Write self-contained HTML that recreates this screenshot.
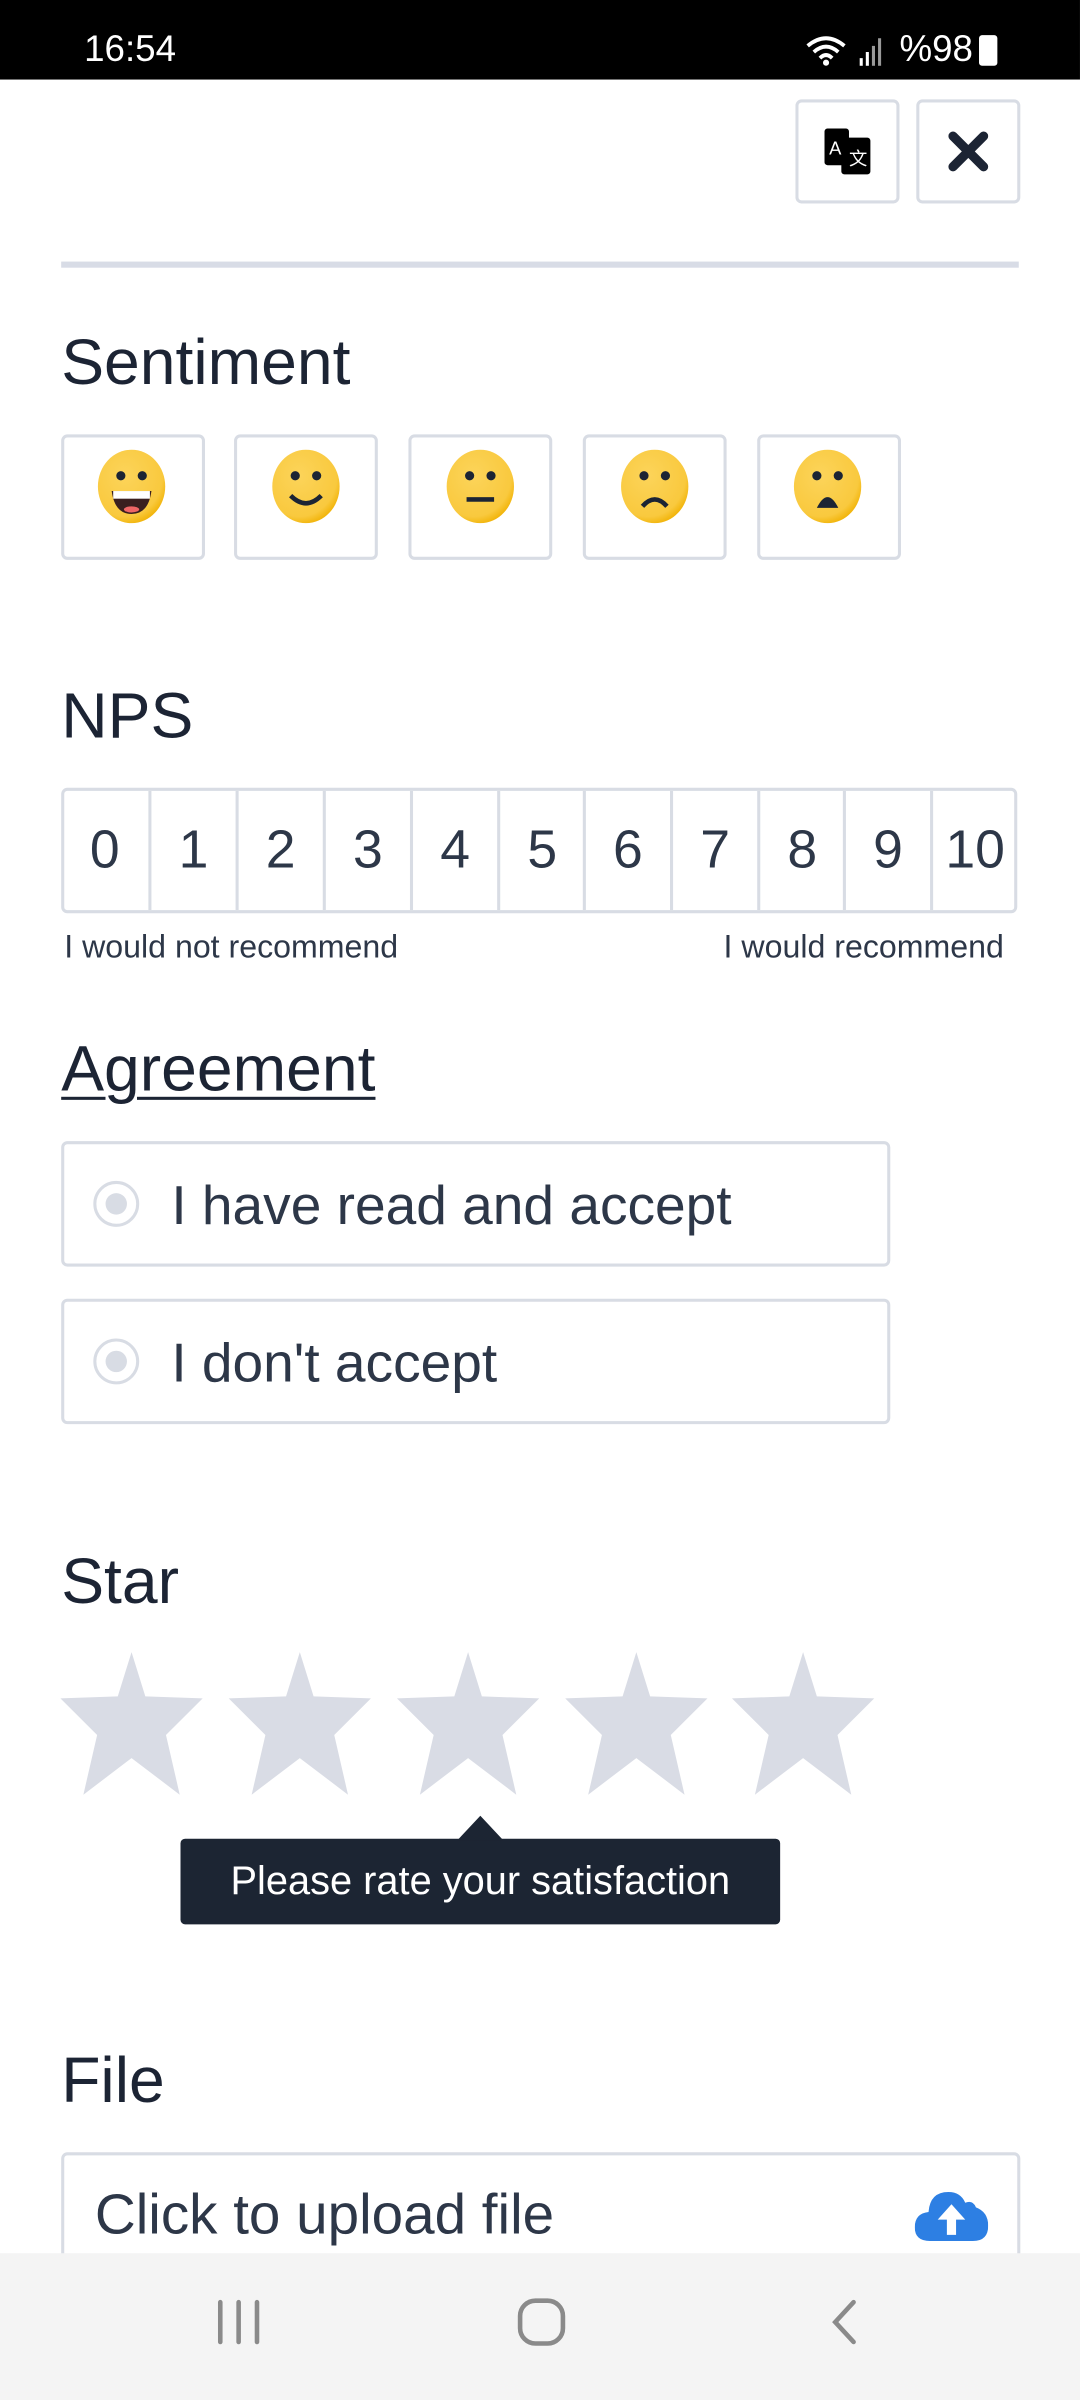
<!DOCTYPE html>
<html><head><meta charset="utf-8"><style>
html,body{margin:0;padding:0;width:1080px;height:2400px;overflow:hidden;background:#fff}
#w{position:absolute;left:0;top:0;width:706px;height:1569px;transform:scale(1.5297);transform-origin:0 0;font-family:"Liberation Sans",Roboto,sans-serif;color:#1c2434}
.a{position:absolute}
.box{position:absolute;border:2px solid #d8dce4;border-radius:4px;box-sizing:border-box;background:#fff}
.t{position:absolute;left:40px;font-size:42px;line-height:1}
.cell{position:absolute;top:0;height:100%;border-left:2px solid #d8dce4;box-sizing:border-box;font-size:35px;color:#2d3748;text-align:center;line-height:78px}
</style></head><body><div id="w">
<div class="a" style="left:0;top:0;width:706px;height:52px;background:#000"></div>
<div class="a" style="left:55px;top:19px;color:#fff;font-size:24px">16:54</div>
<div class="a" style="left:588px;top:19px;color:#fff;font-size:24px">%98</div>
<div class="a" style="left:640px;top:23px;width:12px;height:20px;background:#fff;border-radius:2px"></div>
<svg class="a" style="left:526px;top:22px" width="54" height="22"><path d="M2 8 Q14 -2 26 8 M6 12 Q14 5 22 12 M10 16 Q14 12 18 16" stroke="#fff" stroke-width="2.5" fill="none"/><circle cx="14" cy="19" r="2" fill="#fff"/><rect x="36" y="16" width="2" height="5" fill="#fff"/><rect x="40" y="12" width="2" height="9" fill="#fff"/><rect x="44" y="8" width="2" height="13" fill="#999"/><rect x="48" y="3" width="2" height="18" fill="#999"/></svg>
<div class="box" style="left:520px;top:65px;width:68px;height:68px"></div>
<div class="box" style="left:599px;top:65px;width:68px;height:68px"></div>
<svg class="a" style="left:538px;top:84px" width="32" height="32"><rect x="1" y="0" width="16" height="24" rx="2" fill="#000"/><rect x="12" y="6" width="19" height="24" rx="2" fill="#000"/><text x="4" y="17" fill="#fff" font-size="12" font-family="Liberation Sans">A</text><text x="17" y="24" fill="#fff" font-size="12" font-family="Liberation Sans">文</text></svg>
<svg class="a" style="left:618px;top:84px" width="30" height="30"><path d="M5 5 L25 25 M25 5 L5 25" stroke="#1c2434" stroke-width="6" stroke-linecap="round"/></svg>
<div class="a" style="left:40px;top:171px;width:626px;height:4px;background:#d8dce6"></div>
<div class="t" style="top:216px">Sentiment</div>
<div class="box" style="left:40px;top:284px;width:94px;height:82px"></div>
<div class="box" style="left:153px;top:284px;width:94px;height:82px"></div>
<div class="box" style="left:267px;top:284px;width:94px;height:82px"></div>
<div class="box" style="left:381px;top:284px;width:94px;height:82px"></div>
<div class="box" style="left:495px;top:284px;width:94px;height:82px"></div>
<svg class="a" style="left:0;top:290px" width="706" height="60">
<defs><radialGradient id="g" cx="40%" cy="35%" r="70%"><stop offset="0" stop-color="#fcd45a"/><stop offset="0.8" stop-color="#f9c93e"/><stop offset="1" stop-color="#f0b000"/></radialGradient></defs>
<g fill="#1c2434">
<ellipse cx="86" cy="28" rx="22" ry="24" fill="url(#g)"/><circle cx="79" cy="21" r="3"/><circle cx="93" cy="21" r="3"/><path d="M73 31 H99 Q97 46 86 46 Q75 46 73 31Z" fill="#3a1f1f"/><rect x="74" y="31" width="24" height="5" fill="#fff"/><ellipse cx="86" cy="43" rx="5" ry="2" fill="#e66"/>
<ellipse cx="200" cy="28" rx="22" ry="24" fill="url(#g)"/><circle cx="193" cy="21" r="3"/><circle cx="207" cy="21" r="3"/><path d="M190 34 Q200 44 210 34" stroke="#1c2434" stroke-width="3" fill="none"/>
<ellipse cx="314" cy="28" rx="22" ry="24" fill="url(#g)"/><circle cx="307" cy="21" r="3"/><circle cx="321" cy="21" r="3"/><rect x="305" y="35" width="18" height="3"/>
<ellipse cx="428" cy="28" rx="22" ry="24" fill="url(#g)"/><circle cx="421" cy="21" r="3"/><circle cx="435" cy="21" r="3"/><path d="M420 41 Q428 32 436 41" stroke="#1c2434" stroke-width="3" fill="none"/>
<ellipse cx="541" cy="28" rx="22" ry="24" fill="url(#g)"/><circle cx="534" cy="21" r="3"/><circle cx="548" cy="21" r="3"/><path d="M534 42 Q541 28 548 42Z"/>
</g></svg>
<div class="t" style="top:447px">NPS</div>
<div class="box" style="left:40px;top:515px;width:625px;height:82px;overflow:hidden">
<div class="cell" style="left:-2px;width:57px;border:0">0</div><div class="cell" style="left:55px;width:57px">1</div><div class="cell" style="left:112px;width:57px">2</div><div class="cell" style="left:169px;width:57px">3</div><div class="cell" style="left:226px;width:57px">4</div><div class="cell" style="left:283px;width:57px">5</div><div class="cell" style="left:339px;width:57px">6</div><div class="cell" style="left:396px;width:57px">7</div><div class="cell" style="left:453px;width:57px">8</div><div class="cell" style="left:509px;width:57px">9</div><div class="cell" style="left:566px;width:57px">10</div></div>
<div class="a" style="left:42px;top:608px;font-size:21px;color:#2d3748">I would not recommend</div>
<div class="a" style="left:473px;top:608px;font-size:21px;color:#2d3748;width:189px;white-space:nowrap">I would recommend</div>
<div class="t" style="top:678px;text-decoration:underline;text-decoration-thickness:2px;text-underline-offset:4px">Agreement</div>
<div class="box" style="left:40px;top:746px;width:542px;height:82px"></div>
<div class="box" style="left:40px;top:849px;width:542px;height:82px"></div>
<svg class="a" style="left:60px;top:771px" width="32" height="135"><circle cx="16" cy="16" r="14" fill="#fff" stroke="#d8dce4" stroke-width="2"/><circle cx="16" cy="16" r="7" fill="#d8dce4"/><circle cx="16" cy="119" r="14" fill="#fff" stroke="#d8dce4" stroke-width="2"/><circle cx="16" cy="119" r="7" fill="#d8dce4"/></svg>
<div class="a" style="left:112px;top:767px;font-size:36px;color:#2d3748">I have read and accept</div>
<div class="a" style="left:112px;top:870px;font-size:36px;color:#2d3748">I don't accept</div>
<div class="t" style="top:1013px">Star</div>
<svg class="a" style="left:0;top:1078px" width="706" height="100"><defs><path id="s" d="M0 0 L12 46 L62 48 L30 86 L42 148 L0 110 L-42 148 L-30 86 L-62 48 L-12 46Z" transform="scale(0.75,0.63)"/></defs><g fill="#d9dce5"><use href="#s" x="86" y="2"/><use href="#s" x="196" y="2"/><use href="#s" x="306" y="2"/><use href="#s" x="416" y="2"/><use href="#s" x="525" y="2"/></g></svg>
<div class="a" style="left:118px;top:1202px;width:392px;height:56px;background:#1c2533;border-radius:3px;color:#fff;font-size:26px;line-height:54px;text-align:center">Please rate your satisfaction</div>
<div class="a" style="left:299px;top:1187px;width:0;height:0;border-left:15px solid transparent;border-right:15px solid transparent;border-bottom:16px solid #1c2533"></div>
<div class="t" style="top:1339px">File</div>
<div class="box" style="left:40px;top:1407px;width:627px;height:100px"></div>
<div class="a" style="left:62px;top:1427px;font-size:37px;color:#2d3748">Click to upload file</div>
<svg class="a" style="left:598px;top:1430px" width="48" height="36"><path d="M10 35 Q0 35 0 26 Q0 17 9 16 Q10 3 22 3 Q30 3 33 10 Q38 8 40 13 Q48 16 48 25 Q48 35 38 35Z" fill="#2d7fe3"/><path d="M24 11 L33 21 H27 V31 H21 V21 H15Z" fill="#fff"/></svg>
<div class="a" style="left:0;top:1473px;width:706px;height:96px;background:#f4f4f4"></div>
<svg class="a" style="left:130px;top:1498px" width="450" height="40"><g stroke="#8a8a8a" stroke-width="3" fill="none" stroke-linecap="round"><path d="M14 7 V33 M26 7 V33 M38 7 V33"/><rect x="210" y="6" width="28" height="28" rx="10"/><path d="M428 7 L416 20 L428 33"/></g></svg>
</div></body></html>
